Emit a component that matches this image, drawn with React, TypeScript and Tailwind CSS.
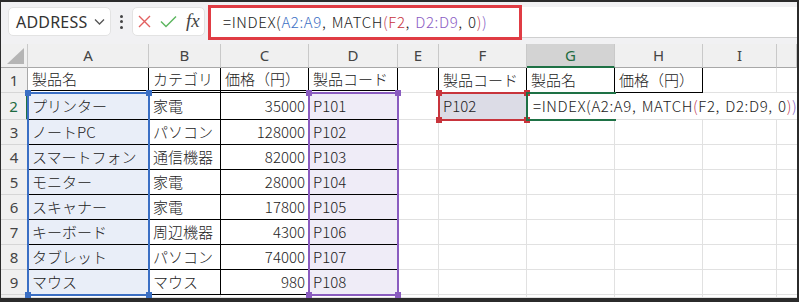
import React from 'react';

const COL_START = ['col-start-1', 'col-start-2', 'col-start-3', 'col-start-4', 'col-start-5', 'col-start-6', 'col-start-7', 'col-start-8', 'col-start-9', 'col-start-10', 'col-start-11'];
const ROW_START = ['row-start-1', 'row-start-2', 'row-start-3', 'row-start-4', 'row-start-5', 'row-start-6', 'row-start-7', 'row-start-8', 'row-start-9', 'row-start-10', 'row-start-11'];

const LETTERS = ['A', 'B', 'C', 'D', 'E', 'F', 'G', 'H', 'I', ''];

type Row = [string, string, number | string, string];

const DATA: Row[] = [
    ['製品名', 'カテゴリ', '価格（円）', '製品コード'],
    ['プリンター', '家電', 35000, 'P101'],
    ['ノートPC', 'パソコン', 128000, 'P102'],
    ['スマートフォン', '通信機器', 82000, 'P103'],
    ['モニター', '家電', 28000, 'P104'],
    ['スキャナー', '家電', 17800, 'P105'],
    ['キーボード', '周辺機器', 4300, 'P106'],
    ['タブレット', 'パソコン', 74000, 'P107'],
    ['マウス', 'マウス', 980, 'P108'],
];

const cellFont = { fontFamily: '"Noto Sans CJK JP", "Noto Sans", sans-serif' };

// Formula text, split into coloured pieces like Excel does
const FormulaText: React.FC<{ inCell?: boolean }> = ({ inCell }) => {
    const ref = inCell ? 'text-[#222]' : '';
    return (
        <>
            <span>{'=INDEX('}</span>
            <span className={inCell ? ref : 'text-[#3c6fc4]'}>A2:A9</span>
            <span>{', MATCH'}</span>
            <span className="text-[#c2405a]">(</span>
            <span className={inCell ? ref : 'text-[#c8343c]'}>F2</span>
            <span>{', '}</span>
            <span className={inCell ? ref : 'text-[#8b5cc4]'}>D2:D9</span>
            <span>{', 0'}</span>
            <span className="text-[#c2405a]">)</span>
            <span className="text-[#7e5cc4]">)</span>
        </>
    );
};

const Handles: React.FC<{ color: string }> = ({ color }) => (
    <>
        <div className={`absolute -left-[4px] -top-[4px] w-[6px] h-[6px] ${color}`} />
        <div className={`absolute -right-[4px] -top-[4px] w-[6px] h-[6px] ${color}`} />
        <div className={`absolute -left-[4px] -bottom-[4px] w-[6px] h-[6px] ${color}`} />
        <div className={`absolute -right-[4px] -bottom-[4px] w-[6px] h-[6px] ${color}`} />
    </>
);

export default function App() {
    const cells: React.ReactNode[] = [];

    // corner
    cells.push(
        <div key="corner" className="col-start-1 row-start-1 relative bg-[#f0f0f0] border-r border-b border-r-[#c9c9c9] border-b-[#a8a8a8]">
            <svg className="absolute right-[3px] bottom-[3px]" width="17" height="16" viewBox="0 0 17 16">
                <polygon points="17,0 17,16 0,16" fill="#b5b5b5" />
            </svg>
        </div>
    );

    // column headers
    LETTERS.forEach((l, i) => {
        const selected = l === 'G';
        cells.push(
            <div
                key={`h${i}`}
                className={`${COL_START[i + 1]} row-start-1 flex items-center justify-center border-r border-r-[#c9c9c9] text-[15px] ${selected ? 'bg-[#d3d3d3] text-[#1e6b41] border-b-2 border-b-[#1e7145]' : 'bg-[#f0f0f0] text-[#444] border-b border-b-[#a8a8a8]'}`}
                style={{ fontFamily: '"Noto Sans", sans-serif' }}
            >
                {l}
            </div>
        );
    });

    // row headers (rows 1..10)
    for (let r = 1; r <= 10; r++) {
        const selected = r === 2;
        cells.push(
            <div
                key={`r${r}`}
                className={`col-start-1 ${ROW_START[r]} flex items-center justify-center bg-[#f0f0f0] border-b border-b-[#d6d6d6] text-[15px] ${selected ? 'text-[#1e6b41] border-r-2 border-r-[#1e7145]' : 'text-[#444] border-r border-r-[#a8a8a8]'}`}
                style={{ fontFamily: '"Noto Sans", sans-serif' }}
            >
                {r <= 9 ? r : ''}
            </div>
        );
    }

    // body cells
    for (let r = 1; r <= 10; r++) {
        for (let c = 0; c < 10; c++) {
            const pos = `${COL_START[c + 1]} ${ROW_START[r]}`;
            // G2 overflows across H2..J2
            if (r === 2 && c === 6) {
                cells.push(
                    <div key={`c${r}-${c}`} className={`${pos} col-span-4 flex items-center pl-[6px] whitespace-pre tracking-[0.6px] [word-spacing:1.5px] font-light text-[15px] text-[#222] border-b border-b-[#e1e1e1]`} style={cellFont}>
                        <FormulaText inCell />
                    </div>
                );
                continue;
            }
            if (r === 2 && c > 6) continue;

            let text: React.ReactNode = '';
            let right = false;
            let cls = 'border-r border-b border-r-[#e1e1e1] border-b-[#e1e1e1]';
            let bg = '';

            if (r <= 9 && c <= 3) {
                const v = DATA[r - 1][c];
                text = v;
                right = typeof v === 'number';
                cls = r === 1
                    ? 'border-r border-r-black border-b-[3px] border-b-black border-double'
                    : 'border-r border-b border-r-black border-b-black';
                if (r >= 2 && c === 0) bg = 'bg-[#e9eef8]';
                if (r >= 2 && c === 3) bg = 'bg-[#efecf7]';
            }
            if (r <= 9 && c === 4) {
                cls = 'border-r border-b border-r-[#e1e1e1] border-b-[#e1e1e1]';
                if (r === 1) cls = 'border-r border-b border-r-black border-b-[#e1e1e1]';
            }
            if (r === 1 && c >= 5 && c <= 7) {
                text = ['製品コード', '製品名', '価格（円）'][c - 5];
                cls = 'border-r border-b border-r-black border-b-black';
            }
            if (r === 2 && c === 5) {
                text = 'P102';
                bg = 'bg-[#dcdce6]';
            }
            if (c === 9) cls = 'border-b border-b-[#e1e1e1]';

            cells.push(
                <div
                    key={`c${r}-${c}`}
                    className={`${pos} ${cls} ${bg} flex items-center overflow-hidden whitespace-nowrap font-light text-[15px] text-[#222] ${right ? 'justify-end pr-[3px]' : 'pl-[4px]'}`}
                    style={cellFont}
                >
                    {text}
                </div>
            );
        }
    }

    return (
        <div className="w-[799px] h-[302px] bg-[#2b2b2b] pt-[2px] pr-[2px] pb-[4px] pl-px">
            <div className="w-full h-full bg-white overflow-hidden flex flex-col">
                {/* Toolbar: name box + formula bar */}
                <div className="h-[42px] shrink-0 bg-[#f1f1f3] flex items-start pt-[5px]">
                    <div className="ml-[7px] w-[103px] h-[29px] bg-white rounded-[5px] border border-[#e3e3e3] flex items-center pl-[7px] pr-[5px] justify-between">
                        <span className="text-[16px] text-[#333] tracking-[0.2px]" style={{ fontFamily: '"Noto Sans", sans-serif' }}>ADDRESS</span>
                        <svg width="11" height="8" viewBox="0 0 11 8">
                            <polyline points="1,1.5 5.5,6 10,1.5" fill="none" stroke="#555" strokeWidth="1.3" />
                        </svg>
                    </div>
                    <div className="w-[21px] h-[29px] flex flex-col items-center justify-center gap-[2.5px]">
                        <div className="w-[3px] h-[3px] rounded-full bg-[#444]" />
                        <div className="w-[3px] h-[3px] rounded-full bg-[#444]" />
                        <div className="w-[3px] h-[3px] rounded-full bg-[#444]" />
                    </div>
                    <div className="w-[73px] h-[29px] bg-white rounded-[5px] border border-[#e3e3e3] flex items-center pl-[5px] gap-[9px]">
                        <svg width="13" height="13" viewBox="0 0 13 13">
                            <path d="M1 1L12 12M12 1L1 12" stroke="#e26060" strokeWidth="1.4" />
                        </svg>
                        <svg width="17" height="13" viewBox="0 0 17 13">
                            <polyline points="1,6.5 6,11.5 16,1.5" fill="none" stroke="#5db760" strokeWidth="1.5" />
                        </svg>
                        <span className="italic text-[19px] text-[#444] leading-none -mt-[3px]" style={{ fontFamily: '"Liberation Serif", serif' }}>fx</span>
                    </div>
                    <div className="ml-[3px] flex-1 h-[31px] bg-white border-b border-[#cfcfcf] flex">
                        <div className="-mt-[2px] w-[314px] h-[35px] border-[3px] border-[#e03c44] flex items-center pl-[12px] whitespace-pre font-light text-[15px] text-[#222] tracking-[0.6px] [word-spacing:1.5px]" style={cellFont}>
                            <FormulaText />
                        </div>
                    </div>
                </div>

                {/* Sheet grid */}
                <div className="flex-1 grid grid-cols-[27px_121px_72px_88px_89px_41px_88px_88px_88px_74px_1fr] grid-rows-[24px_25px_27px_25px_25px_25px_25px_25px_25px_25px_1fr]">
                    {cells}

                    {/* selection highlights */}
                    <div className="col-start-2 row-start-3 row-end-11 -m-px relative border-2 border-[#3b6fc4] pointer-events-none">
                        <Handles color="bg-[#3b6fc4]" />
                    </div>
                    <div className="col-start-5 row-start-3 row-end-11 -m-px relative border-2 border-[#8a5cc0] pointer-events-none">
                        <Handles color="bg-[#8a5cc0]" />
                    </div>
                    <div className="col-start-7 row-start-3 -m-px relative border-2 border-[#c8343c] pointer-events-none">
                        <Handles color="bg-[#c8343c]" />
                    </div>
                    <div className="col-start-8 row-start-3 -m-px relative border-2 border-r-0 border-[#1e7145] pointer-events-none" />
                </div>
            </div>
        </div>
    );
}
